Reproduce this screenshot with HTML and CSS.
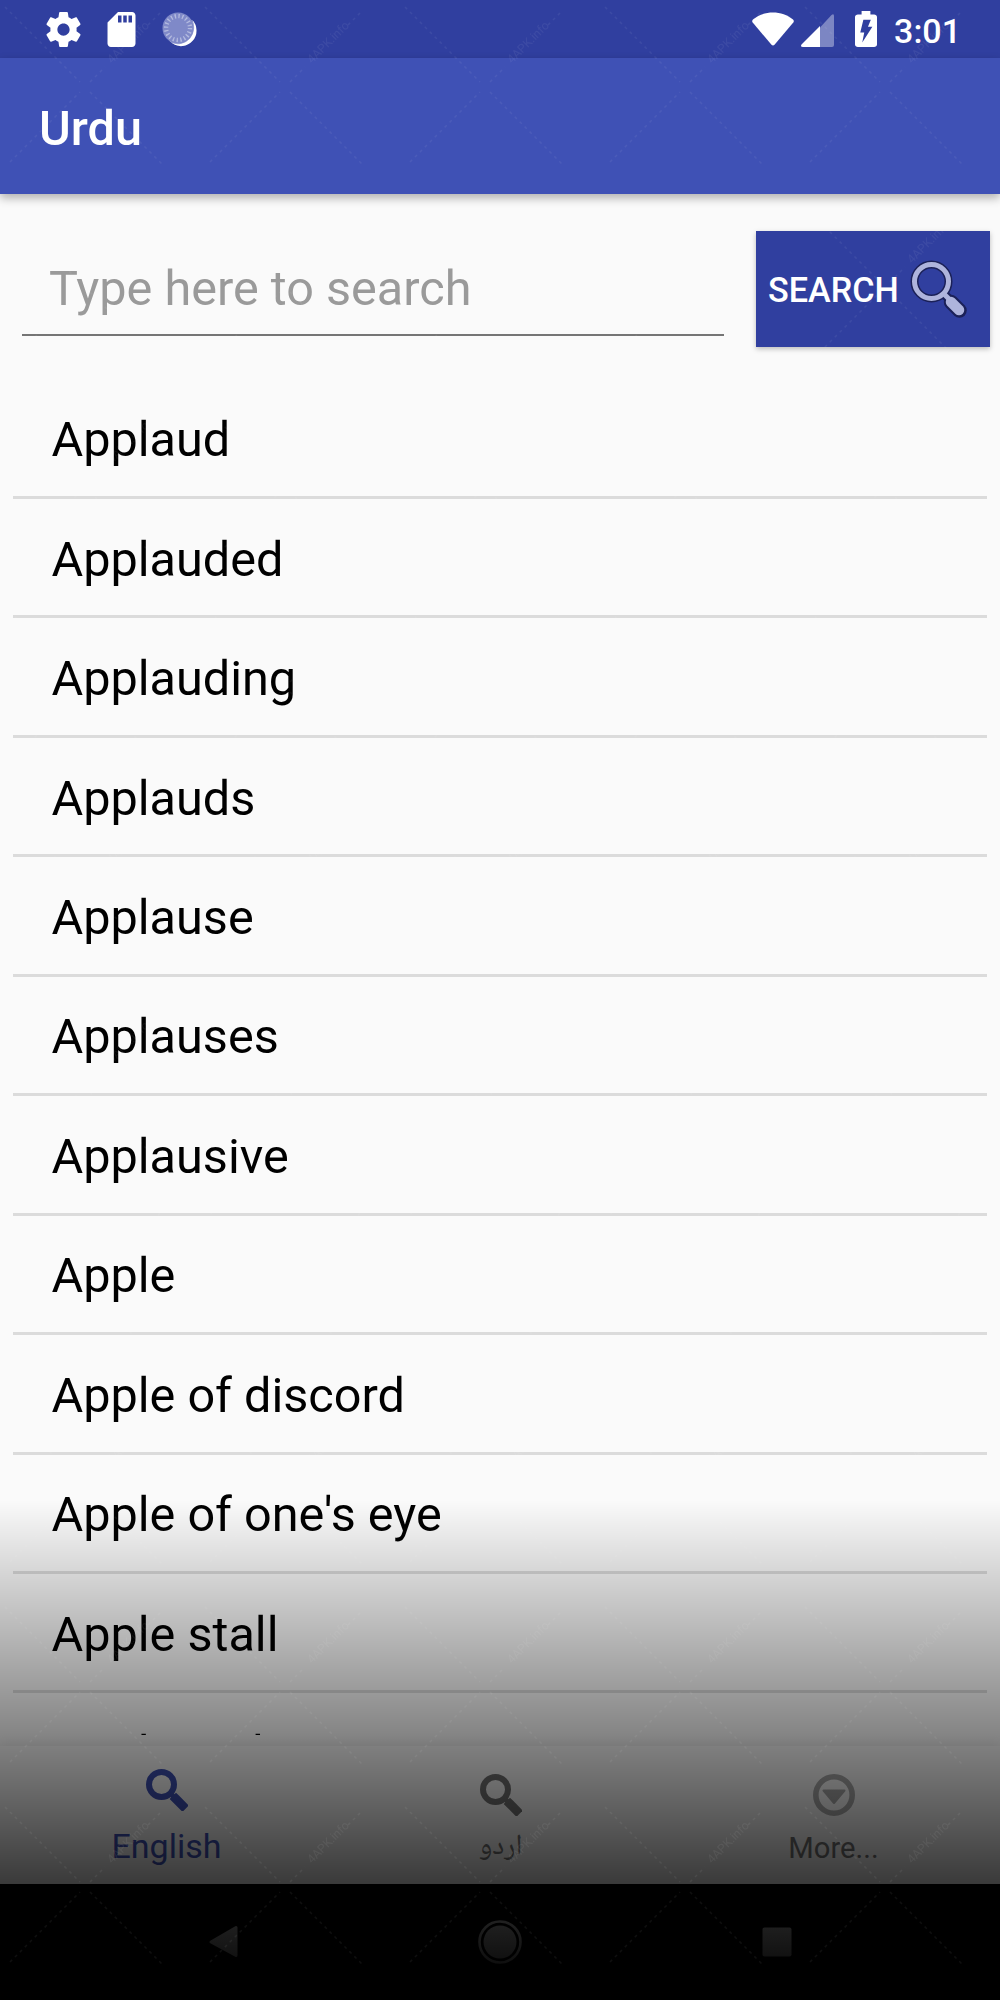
FILE: index.html
```html
<!DOCTYPE html>
<html lang="en">
<head>
    <meta charset="UTF-8">
    <meta name="viewport" content="width=device-width, initial-scale=1.0">
    <title>Urdu</title>
    <link rel="stylesheet" href="styles.css">
</head>
<body>
    <div class="screen">
        <div class="status-bar">
            <div class="status-left">
                <svg class="icon-gear" viewBox="2 2 20 20"><path fill="#fff" d="M19.43 12.98c.04-.32.07-.64.07-.98s-.03-.66-.07-.98l2.11-1.65c.19-.15.24-.42.12-.64l-2-3.46c-.12-.22-.39-.3-.61-.22l-2.49 1c-.52-.4-1.08-.73-1.69-.98l-.38-2.65C14.46 2.18 14.25 2 14 2h-4c-.25 0-.46.18-.49.42l-.38 2.65c-.61.25-1.17.59-1.69.98l-2.49-1c-.23-.09-.49 0-.61.22l-2 3.46c-.13.22-.07.49.12.64l2.11 1.65c-.04.32-.07.65-.07.98s.03.66.07.98l-2.11 1.65c-.19.15-.24.42-.12.64l2 3.46c.12.22.39.3.61.22l2.49-1c.52.4 1.08.73 1.69.98l.38 2.65c.03.24.24.42.49.42h4c.25 0 .46-.18.49-.42l.38-2.65c.61-.25 1.17-.59 1.69-.98l2.49 1c.23.09.49 0 .61-.22l2-3.46c.12-.22.07-.49-.12-.64l-2.11-1.65zM12 15.5c-1.93 0-3.5-1.57-3.5-3.5s1.57-3.5 3.5-3.5 3.5 1.57 3.5 3.5-1.57 3.5-3.5 3.5z"/></svg>
                <svg class="icon-sd" viewBox="4 2 16 20"><path fill="#fff" d="M18 2h-8L4.02 8 4 20c0 1.1.9 2 2 2h12c1.1 0 2-.9 2-2V4c0-1.1-.9-2-2-2zm-6 6h-2V4h2v4zm3 0h-2V4h2v4zm3 0h-2V4h2v4z"/></svg>
                <svg class="icon-sync" viewBox="0 0 36 36">
                    <circle cx="19" cy="19" r="15.5" fill="#a6aed8"/>
                    <path d="M31 8a16 16 0 0 1-21 24a17 17 0 0 0 21-24z" fill="#fff"/>
                    <circle cx="16.5" cy="16.5" r="16" fill="#7f89c8"/>
                    <circle cx="16.5" cy="16.5" r="12.3" fill="none" stroke="#b3badf" stroke-width="4.5" stroke-dasharray="1.4 2.464"/>
                </svg>
            </div>
            <div class="status-right">
                <svg class="icon-wifi" viewBox="0 0 42 34"><path fill="#fff" d="M1 7.500C12-2 30-2 41 7.500c1 1 1 2 .3 3L22.500 32.800q-1.500 1.600-3 0L.7 10.500c-.7-1-.7-2 .3-3z"/></svg>
                <svg class="icon-signal" viewBox="0 0 33 33"><path fill="#7c86c3" d="M19 13.500 30.500 1Q33-1 33 2v29q0 2-2 2H19z"/><path fill="#fff" d="M19 12v21H2q-3 0-1.500-2.500z"/></svg>
                <svg class="icon-battery" viewBox="7 2 10 20" preserveAspectRatio="none"><path fill="#fff" d="M15.670 4H14V2h-4v2H8.330C7.600 4 7 4.600 7 5.330v15.330C7 21.400 7.600 22 8.330 22h7.330c.740 0 1.340-.6 1.340-1.330V5.330C17 4.600 16.400 4 15.670 4z"/><path fill="#303f9f" d="M10.800 6.800h3.400l-1.300 4h2L10.300 19.500l.9-5.500H9.400z"/></svg>
                <span class="clock">3:01</span>
            </div>
        </div>

        <header class="app-bar">
            <h1>Urdu</h1>
        </header>

        <main class="content">
            <form class="search-form">
                <input type="text" class="search-input" placeholder="Type here to search">
                <button type="button" class="search-button">
                    <span>SEARCH</span>
                    <svg viewBox="0 0 58 60">
                        <path d="M34 35l6 6" stroke="#1b2158" stroke-width="9"/>
                        <path d="M41 43l8.500 8.500" stroke="#1b2158" stroke-width="14.500" stroke-linecap="round"/>
                        <circle cx="21.500" cy="22.500" r="17" fill="none" stroke="#1b2158" stroke-width="8"/>
                        <path d="M34 35l6 6" stroke="#aeb4dc" stroke-width="5"/>
                        <path d="M41 43l8 8" stroke="#aeb4dc" stroke-width="10.500" stroke-linecap="round"/>
                        <circle cx="21.500" cy="22.500" r="17" fill="none" stroke="#aeb4dc" stroke-width="5"/>
                    </svg>
                </button>
            </form>

            <ul class="word-list">
                <li>Applaud</li>
                <li>Applauded</li>
                <li>Applauding</li>
                <li>Applauds</li>
                <li>Applause</li>
                <li>Applauses</li>
                <li>Applausive</li>
                <li>Apple</li>
                <li>Apple of discord</li>
                <li>Apple of one's eye</li>
                <li>Apple stall</li>
                <li>Apple-jack</li>
            </ul>
        </main>

        <nav class="tabs">
            <a class="tab active">
                <svg viewBox="0 0 42 42">
                    <circle cx="15.500" cy="15.500" r="12.500" fill="none" stroke="currentColor" stroke-width="6"/>
                    <path d="M24 24l6 6" stroke="currentColor" stroke-width="5"/>
                    <path d="M30 30l6.500 6.500" stroke="currentColor" stroke-width="9" stroke-linecap="square"/>
                </svg>
                <span>English</span>
            </a>
            <a class="tab">
                <svg viewBox="0 0 42 42">
                    <circle cx="15.500" cy="15.500" r="12.500" fill="none" stroke="currentColor" stroke-width="6"/>
                    <path d="M24 24l6 6" stroke="currentColor" stroke-width="5"/>
                    <path d="M30 30l6.500 6.500" stroke="currentColor" stroke-width="9" stroke-linecap="square"/>
                </svg>
                <span class="urdu" lang="ur">اردو</span>
            </a>
            <a class="tab more">
                <svg viewBox="0 0 42 42">
                    <circle cx="21" cy="21" r="18.200" fill="none" stroke="currentColor" stroke-width="5.600"/>
                    <path d="M10.500 16.500h21L21 29z" fill="currentColor" stroke="currentColor" stroke-width="2" stroke-linejoin="round"/>
                </svg>
                <span>More...</span>
            </a>
        </nav>

        <div class="system-nav">
            <svg viewBox="0 0 44 44"><path d="M34 7.500v28L9 22z" fill="#ccc" stroke="#ccc" stroke-width="3" stroke-linejoin="round"/></svg>
            <svg viewBox="0 0 44 44"><circle cx="22" cy="22" r="16.500" fill="#ccc"/><circle cx="22" cy="22" r="20.500" fill="none" stroke="#ccc" stroke-width="2.600"/></svg>
            <svg viewBox="0 0 44 44"><rect x="7.500" y="7.500" width="29" height="29" rx="2" fill="#ccc"/></svg>
        </div>

        <div class="fade"></div>

        <svg class="watermark" width="1000" height="2000">
            <defs>
                <pattern id="mark" width="200" height="200" patternUnits="userSpaceOnUse">
                    <path d="M5 7l75 75M90 92l73 73M10 162l70-70M90 82l15-15M148 25l12-12" stroke="#fff" stroke-width="1.500" stroke-dasharray="3 4" fill="none"/>
                    <text x="112" y="64" transform="rotate(-45 112 64)">4APK.info</text>
                </pattern>
            </defs>
            <rect width="1000" height="2000" fill="url(#mark)"/>
        </svg>
    </div>
</body>
</html>
```
FILE: styles.css
```css
body {
    margin: 0;
    font-family: Roboto, "Noto Sans", sans-serif;
    background-color: #fafafa;
}
.screen {
    position: relative;
    display: flex;
    flex-direction: column;
    width: 1000px;
    height: 2000px;
    overflow: hidden;
}
svg {
    display: block;
    flex: none;
}
/* Status bar */
.status-bar {
    display: flex;
    justify-content: space-between;
    height: 58px;
    box-sizing: border-box;
    padding: 0 39px 0 46px;
    background-color: #303f9f;
    color: #fff;
}
.status-left, .status-right {
    display: flex;
    align-items: center;
}
.icon-gear {
    width: 35px;
    height: 35px;
}
.icon-sd {
    width: 29px;
    height: 35px;
    margin-left: 26px;
}
.icon-sync {
    width: 35px;
    height: 35px;
    margin-left: 26px;
}
.icon-wifi {
    width: 42px;
    height: 34px;
}
.icon-signal {
    width: 33px;
    height: 33px;
    margin: 3px 0 0 7px;
}
.icon-battery {
    width: 22px;
    height: 36px;
    margin-left: 21px;
}
.clock {
    margin: 3px 0 0 17px;
    font-size: 34px;
    font-weight: 500;
}
/* App bar */
.app-bar {
    display: flex;
    align-items: center;
    height: 136px;
    padding-left: 39px;
    background-color: #3f51b5;
    box-shadow: 0 4px 9px rgba(0, 0, 0, 0.3);
    z-index: 1;
}
h1 {
    margin: 4px 0 0;
    color: #fff;
    font-size: 48.6px;
    font-weight: 500;
}
/* Search */
.content {
    flex: none;
    height: 1541px;
    overflow: hidden;
}
.search-form {
    display: flex;
    align-items: flex-start;
    justify-content: space-between;
    height: 148.5px;
    padding: 37px 10px 0 22px;
}
.search-input {
    width: 702px;
    height: 105px;
    box-sizing: border-box;
    padding: 12px 28px 0 27px;
    border: none;
    border-bottom: 2px solid #757575;
    background: none;
    font-family: inherit;
    font-size: 48.6px;
}
.search-input::placeholder {
    color: #9a9a9a;
}
.search-button {
    display: flex;
    align-items: center;
    width: 234px;
    height: 116px;
    padding: 0 0 0 12px;
    border: none;
    background-color: #303f9f;
    box-shadow: 0 2px 5px rgba(0, 0, 0, 0.25);
    color: #fff;
    font-family: inherit;
    font-size: 34.2px;
    font-weight: 500;
}
.search-button span {
    padding-top: 2px;
}
.search-button svg {
    width: 58px;
    height: 60px;
    margin-left: 11px;
}
/* Words */
.word-list {
    margin: 0 13px;
    padding: 0;
    list-style: none;
}
.word-list li {
    display: flex;
    align-items: center;
    height: 119.46px;
    box-sizing: border-box;
    padding: 4px 0 0 38.5px;
    border-bottom: 3px solid #dbdbdb;
    color: #000;
    font-size: 48.6px;
}
/* Tabs */
.tabs {
    display: flex;
    flex: none;
    height: 137.5px;
    margin-top: 11px;
    background-color: #fafafa;
    box-shadow: 0 -2px 12px rgba(0, 0, 0, 0.08);
}
.tab {
    display: flex;
    flex: 1;
    flex-direction: column;
    align-items: center;
    padding-top: 28px;
    color: #737373;
    font-size: 29.2px;
}
.tab svg {
    width: 42px;
    height: 42px;
}
.tab span {
    margin-top: 15px;
    line-height: 34px;
    color: #737373;
}
.active {
    padding-top: 23px;
    padding-right: 1px;
    color: #3f51b5;
    font-size: 34px;
}
.active span {
    margin-top: 18px;
    color: #3f51b5;
}
.tab .urdu {
    font-family: "Noto Naskh Arabic", "DejaVu Sans", sans-serif;
    font-size: 29px;
}
.more svg {
    color: #aaa;
}
/* System buttons */
.system-nav {
    display: flex;
    flex: none;
    align-items: center;
    justify-content: center;
    gap: 232.5px;
    height: 116.5px;
    background-color: #000;
}
.system-nav svg {
    width: 44px;
    height: 44px;
}
.fade {
    position: absolute;
    left: 0;
    right: 0;
    bottom: 0;
    height: 500px;
    background: linear-gradient(rgba(0, 0, 0, 0), #000);
    z-index: 2;
}
.watermark {
    position: absolute;
    top: 0;
    left: 0;
    opacity: 0.06;
    z-index: 3;
}
.watermark text {
    fill: #fff;
    font-size: 12px;
}
```
